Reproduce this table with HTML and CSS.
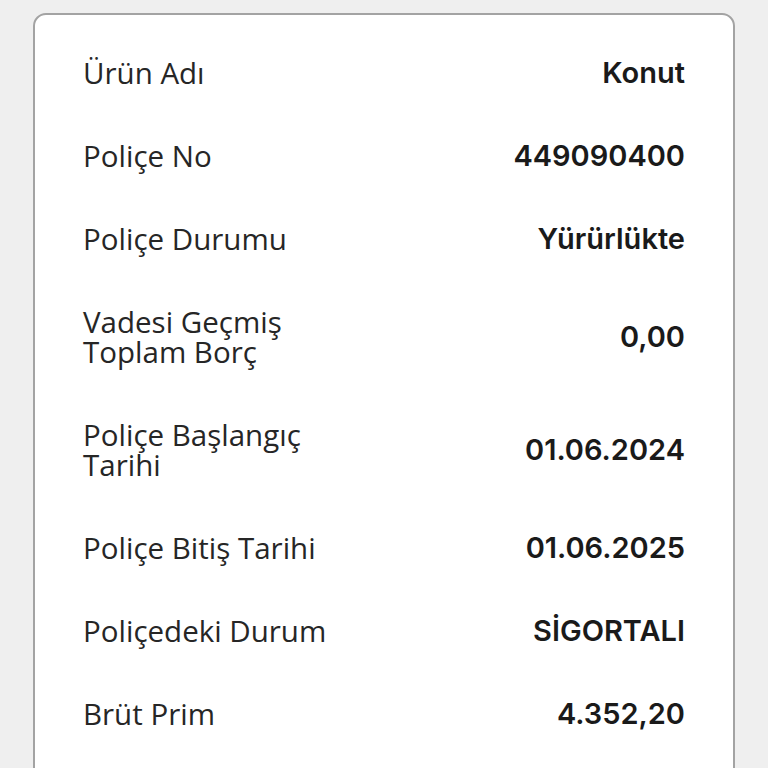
FILE: index.html
```html
<!DOCTYPE html>
<html lang="tr">
<head>
<meta charset="utf-8">
<title>Poliçe Detayı</title>
<link rel="stylesheet" href="styles.css">
</head>
<body>
<div class="page">
  <div class="card">
    <div class="row"><div class="label">Ürün Adı</div><div class="value">Konut</div></div>
    <div class="row"><div class="label">Poliçe No</div><div class="value">449090400</div></div>
    <div class="row"><div class="label">Poliçe Durumu</div><div class="value">Yürürlükte</div></div>
    <div class="row"><div class="label">Vadesi Geçmiş Toplam Borç</div><div class="value">0,00</div></div>
    <div class="row"><div class="label">Poliçe Başlangıç Tarihi</div><div class="value">01.06.2024</div></div>
    <div class="row"><div class="label">Poliçe Bitiş Tarihi</div><div class="value">01.06.2025</div></div>
    <div class="row"><div class="label">Poliçedeki Durum</div><div class="value">SİGORTALI</div></div>
    <div class="row"><div class="label">Brüt Prim</div><div class="value">4.352,20</div></div>
  </div>
</div>
</body>
</html>
```
FILE: styles.css
```css
html, body {
  margin: 0;
  padding: 0;
  background: #efefef;
  height: 100%;
  overflow: hidden;
}
.page {
  padding: 13px 33px 0 33px;
  font-family: "Open Sans", "Noto Sans", sans-serif;
}
.card {
  background: #ffffff;
  border: 2px solid #a3a3a3;
  border-radius: 13px;
  padding: 16px 48px 40px 48px;
  min-height: 800px;
}
.row {
  display: flex;
  align-items: center;
  justify-content: space-between;
  gap: 24px;
  padding: 26.5px 0;
}
.label {
  max-width: 275px;
  font-size: 29.5px;
  line-height: 30px;
  font-weight: 400;
  color: #262626;
}
.value {
  font-family: "Inter", "Open Sans", sans-serif;
  font-size: 29px;
  line-height: 30px;
  font-weight: 600;
  color: #1a1a1a;
  text-align: right;
  white-space: nowrap;
}
```
